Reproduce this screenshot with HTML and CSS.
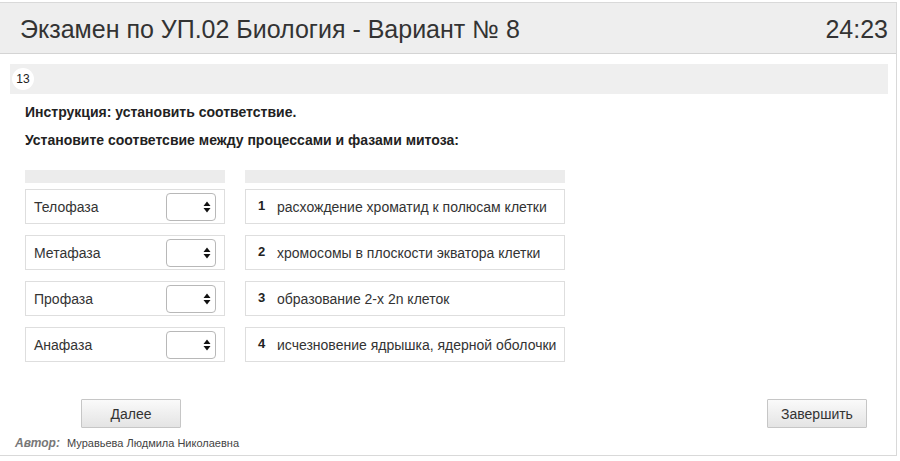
FILE: index.html
```html
<!DOCTYPE html>
<html lang="ru">
<head>
<meta charset="utf-8">
<title>Экзамен</title>
<link rel="stylesheet" href="styles.css">
</head>
<body>
<div class="frame">
  <div class="header">
    <div class="title">Экзамен по УП.02 Биология - Вариант № 8</div>
    <div class="timer">24:23</div>
  </div>
  <div class="qbar"><span class="badge">13</span></div>
  <div class="instr">Инструкция: установить соответствие.</div>
  <div class="instr second">Установите соответсвие между процессами и фазами митоза:</div>
  <div class="match">
    <div class="col left">
      <div class="colhead"></div>
      <div class="item"><span>Телофаза</span><span class="sel"><svg width="8" height="12" viewBox="0 0 8 12"><path d="M4 0.5 L7.5 5 L0.5 5 Z M4 11.5 L7.5 7 L0.5 7 Z" fill="#111"/></svg></span></div>
      <div class="item"><span>Метафаза</span><span class="sel"><svg width="8" height="12" viewBox="0 0 8 12"><path d="M4 0.5 L7.5 5 L0.5 5 Z M4 11.5 L7.5 7 L0.5 7 Z" fill="#111"/></svg></span></div>
      <div class="item"><span>Профаза</span><span class="sel"><svg width="8" height="12" viewBox="0 0 8 12"><path d="M4 0.5 L7.5 5 L0.5 5 Z M4 11.5 L7.5 7 L0.5 7 Z" fill="#111"/></svg></span></div>
      <div class="item"><span>Анафаза</span><span class="sel"><svg width="8" height="12" viewBox="0 0 8 12"><path d="M4 0.5 L7.5 5 L0.5 5 Z M4 11.5 L7.5 7 L0.5 7 Z" fill="#111"/></svg></span></div>
    </div>
    <div class="col right">
      <div class="colhead"></div>
      <div class="item"><b class="num">1</b><span>расхождение хроматид к полюсам клетки</span></div>
      <div class="item"><b class="num">2</b><span>хромосомы в плоскости экватора клетки</span></div>
      <div class="item"><b class="num">3</b><span>образование 2-х 2n клеток</span></div>
      <div class="item"><b class="num">4</b><span>исчезновение ядрышка, ядерной оболочки</span></div>
    </div>
  </div>
  <div class="buttons">
    <button class="btn next">Далее</button>
    <button class="btn finish">Завершить</button>
  </div>
  <div class="author"><b>Автор:</b> <span>Муравьева Людмила Николаевна</span></div>
</div>
</body>
</html>
```

FILE: styles.css
```css
html, body {
  margin: 0;
  padding: 0;
  background: #fff;
}
body {
  font-family: "Liberation Sans", Arial, sans-serif;
  color: #333;
}
.frame {
  margin-top: 2px;
  width: 897px;
  height: 454px;
  border: 1px solid #d9d9d9;
  border-left: none;
  box-sizing: border-box;
  display: flex;
  flex-direction: column;
}
.header {
  height: 51px;
  background: #eeeeee;
  border-bottom: 1px solid #d4d4d4;
  box-sizing: border-box;
  display: flex;
  align-items: center;
  justify-content: space-between;
  padding: 0 8px 0 20px;
}
.title, .timer {
  font-size: 25px;
  color: #333;
  padding-top: 2px;
}
.qbar {
  margin: 10px 8px 0 10px;
  height: 30px;
  background: #efefef;
  display: flex;
  align-items: center;
}
.badge {
  margin-left: 2px;
  width: 22px;
  height: 22px;
  border-radius: 50%;
  background: #fff;
  font-size: 12px;
  color: #222;
  display: flex;
  align-items: center;
  justify-content: center;
}
.instr {
  margin: 10px 0 0 25px;
  font-size: 14px;
  line-height: 16px;
  font-weight: bold;
  color: #222;
}
.instr.second {
  margin-top: 12px;
}
.match {
  margin: 22px 0 0 25px;
  display: flex;
  gap: 20px;
}
.col {
  display: flex;
  flex-direction: column;
  gap: 11px;
}
.col.left { width: 200px; }
.col.right { width: 320px; }
.colhead {
  height: 13px;
  background: #ececec;
  margin-bottom: -5px;
}
.item {
  height: 35px;
  box-sizing: border-box;
  border: 1px solid #dedede;
  display: flex;
  align-items: center;
  font-size: 14px;
  color: #333;
}
.left .item {
  justify-content: space-between;
  padding: 0 8px 0 8px;
}
.sel {
  width: 50px;
  height: 28px;
  box-sizing: border-box;
  border: 1px solid #b8b8b8;
  border-radius: 4px;
  background: #fff;
  display: flex;
  align-items: center;
  justify-content: flex-end;
  padding-right: 4px;
}
.right .item {
  padding-left: 12px;
}
.num {
  font-size: 13px;
  font-weight: bold;
  color: #222;
  width: 19px;
  margin-top: -3px;
}
.buttons {
  margin-top: 37px;
  display: flex;
  justify-content: space-between;
  padding: 0 29px 0 81px;
}
.btn {
  width: 100px;
  height: 29px;
  font-family: "Liberation Sans", Arial, sans-serif;
  font-size: 14px;
  color: #333;
  border: 1px solid #c6c6c6;
  border-radius: 1px;
  background: linear-gradient(#fafafa, #e4e4e4);
  padding: 0;
}
.author {
  margin: 8px 0 0 15px;
  font-size: 11px;
  line-height: 14px;
  color: #444;
}
.author b {
  font-size: 12px;
  font-style: italic;
  color: #777;
  margin-right: 4px;
}
```
